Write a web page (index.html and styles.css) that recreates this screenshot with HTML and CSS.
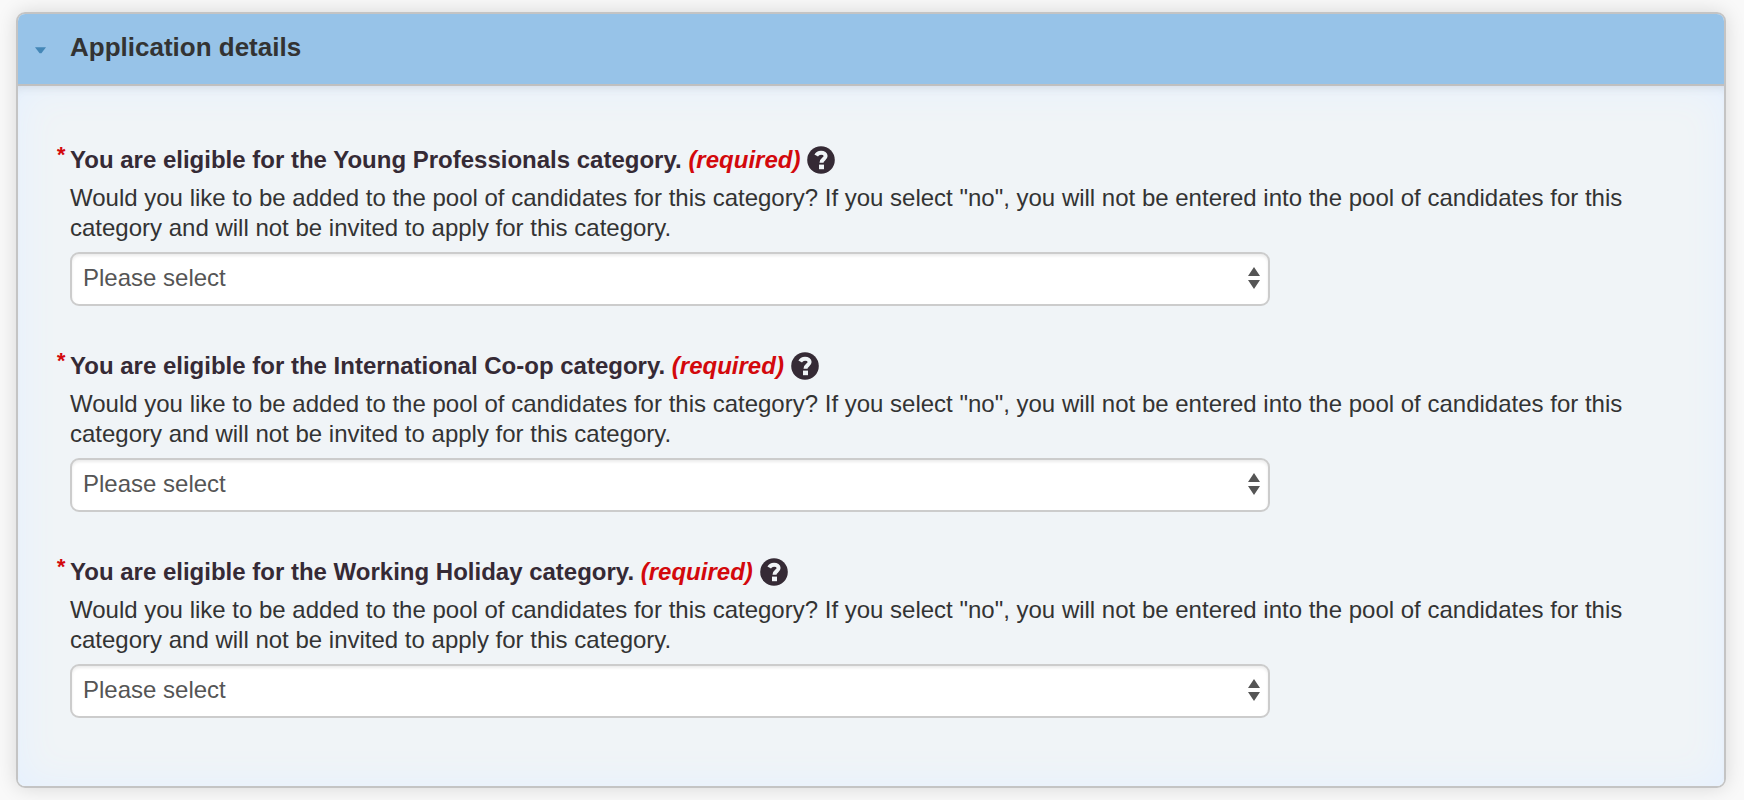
FILE: index.html
```html
<!DOCTYPE html>
<html lang="en">
<head>
  <meta charset="UTF-8">
  <title>Application details</title>
  <link rel="stylesheet" href="styles.css">
</head>
<body>

<svg class="sprite" aria-hidden="true">
  <symbol id="help" viewBox="0 0 28 28">
    <circle cx="14" cy="14" r="13.8" fill="#352a35"/>
    <path d="M9.200 9.500C10.200 7.500 11.800 6.700 14 6.700c2.700 0 4.600 1.300 4.600 3.400 0 3.100-4.100 3.100-4.100 6.600" fill="none" stroke="#f0f4f7" stroke-width="4"/>
    <rect x="12" y="18.600" width="5" height="4.600" fill="#f0f4f7"/>
  </symbol>
</svg>

<form>
  <details class="panel" open>
    <summary>
      <svg class="arrow" viewBox="0 0 12 7" aria-hidden="true"><path d="M0 0h12L7 6.500H5z" fill="#4487b7"/></svg>
      <h2>Application details</h2>
    </summary>

    <div class="panel-body">
      <div class="field">
        <div class="field-title">
          <label for="young">You are eligible for the Young Professionals category. <em>(required)</em></label>
          <button type="button" class="help" aria-label="Help"><svg><use href="#help"/></svg></button>
        </div>
        <p>Would you like to be added to the pool of candidates for this category? If you select "no", you will not be entered into the pool of candidates for this category and will not be invited to apply for this category.</p>
        <select id="young" required>
          <option value="">Please select</option>
          <option value="yes">Yes</option>
          <option value="no">No</option>
        </select>
      </div>

      <div class="field">
        <div class="field-title">
          <label for="coop">You are eligible for the International Co-op category. <em>(required)</em></label>
          <button type="button" class="help" aria-label="Help"><svg><use href="#help"/></svg></button>
        </div>
        <p>Would you like to be added to the pool of candidates for this category? If you select "no", you will not be entered into the pool of candidates for this category and will not be invited to apply for this category.</p>
        <select id="coop" required>
          <option value="">Please select</option>
          <option value="yes">Yes</option>
          <option value="no">No</option>
        </select>
      </div>

      <div class="field">
        <div class="field-title">
          <label for="holiday">You are eligible for the Working Holiday category. <em>(required)</em></label>
          <button type="button" class="help" aria-label="Help"><svg><use href="#help"/></svg></button>
        </div>
        <p>Would you like to be added to the pool of candidates for this category? If you select "no", you will not be entered into the pool of candidates for this category and will not be invited to apply for this category.</p>
        <select id="holiday" required>
          <option value="">Please select</option>
          <option value="yes">Yes</option>
          <option value="no">No</option>
        </select>
      </div>
    </div>
  </details>
</form>

</body>
</html>
```
FILE: styles.css
```css
* {
  box-sizing: border-box;
}

body {
  margin: 0;
  padding: 12px 18px 12px 16px;
  background-color: #f9f9f9;
  color: #333;
  font-family: "Liberation Sans", Arial, sans-serif;
  font-size: 24px;
  line-height: 30px;
}

.sprite {
  display: none;
}

.panel {
  border: 2px solid #c4c4c4;
  border-radius: 9px;
  overflow: hidden;
  box-shadow: 0 0 20px rgba(0, 0, 0, 0.14);
}

summary {
  display: flex;
  align-items: center;
  gap: 24px;
  padding: 17px 17px 21px;
  border-bottom: 2px solid #c0c0c0;
  background-color: #97c3e8;
  list-style: none;
  cursor: pointer;
}

.arrow {
  width: 11px;
  height: 7px;
  margin-top: 6px;
}

h2 {
  margin: 0;
  font-size: 26px;
  line-height: 32px;
}

.panel-body {
  padding: 59px 52px 68px;
  background-color: #f0f4f7;
  box-shadow: inset 0 8px 12px -8px rgba(0, 0, 0, 0.12), inset 0 0 40px #e4f0ff;
}

.field + .field {
  margin-top: 45px;
}

.field-title {
  display: flex;
  align-items: center;
  gap: 7px;
  margin-bottom: 8px;
}

label {
  color: #352a35;
  font-weight: bold;
}

/* asterisk hangs in the left margin */
label::before {
  content: "*";
  display: inline-block;
  width: 14px;
  margin-left: -14px;
  color: #d3080c;
  font-size: 22px;
  font-style: italic;
  line-height: 20px;
  vertical-align: top;
}

em {
  color: #d3080c;
}

.help {
  padding: 0;
  border: none;
  background: none;
  cursor: pointer;
}

.help svg {
  display: block;
  width: 28px;
  height: 28px;
}

p {
  margin: 0;
}

select {
  display: block;
  width: 100%;
  max-width: 1200px;
  height: 54px;
  margin-top: 9px;
  padding: 0 11px 4px;
  border: 2px solid #ccc;
  border-radius: 9px;
  appearance: none;
  background: #fff url("data:image/svg+xml,%3Csvg xmlns='http://www.w3.org/2000/svg' width='12' height='22'%3E%3Cpath d='M0 9L6 0l6 9zM0 13h12l-6 9z' fill='%23555'/%3E%3C/svg%3E") no-repeat right 8px top 13px;
  box-shadow: inset 0 2px 3px rgba(0, 0, 0, 0.08);
  color: #555;
  font-family: inherit;
  font-size: 24px;
}
```
